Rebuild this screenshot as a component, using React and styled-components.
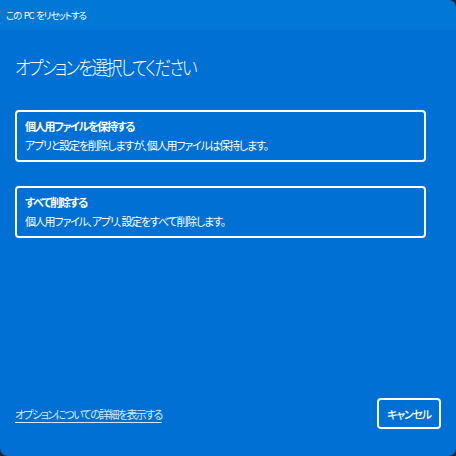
import React from "react";
import styled, { createGlobalStyle } from "styled-components";

const Global = createGlobalStyle`
  html, body { margin: 0; padding: 0; background: #1d2733; }
  body { font-family: "Noto Sans CJK JP", "Noto Sans", sans-serif; }
  * { box-sizing: border-box; }
`;

const Window = styled.div`
  width: 456px;
  height: 456px;
  display: flex;
  flex-direction: column;
  background: #0070d4;
  border-radius: 0 8px 8px 8px;
  overflow: hidden;
  color: #fff;
  font-feature-settings: "palt";
`;

const TitleBar = styled.div`
  height: 31px;
  flex: none;
  display: flex;
  align-items: center;
  padding: 0 0 0 6px;
  background: #0078d6;
  border-bottom: 1px solid #0a6fc8;
  font-size: 9.5px;
  letter-spacing: -1.1px;
  word-spacing: 1.5px;
`;

const Body = styled.div`
  flex: 1;
  display: flex;
  flex-direction: column;
  padding: 22px 30px 27px 15px;
`;

const Heading = styled.h1`
  margin: 0 0 29px 0;
  font-size: 19px;
  font-weight: 300;
  line-height: 28px;
  letter-spacing: -2.2px;
  transform: scaleX(0.87);
  transform-origin: left center;
`;

const Options = styled.div`
  display: flex;
  flex-direction: column;
  gap: 24px;
`;

const Option = styled.button`
  all: unset;
  box-sizing: border-box;
  display: flex;
  flex-direction: column;
  justify-content: center;
  height: 52px;
  padding: 0 8px 1px 8px;
  border: 2px solid #fff;
  border-radius: 4px;
  color: #fff;
  cursor: pointer;
`;

const OptionTitle = styled.div`
  font-size: 11px;
  font-weight: 700;
  line-height: 19px;
  letter-spacing: -1.3px;
`;

const OptionDesc = styled.div`
  font-size: 11px;
  font-weight: 400;
  line-height: 19px;
  letter-spacing: -1.2px;
`;

const Footer = styled.div`
  margin-top: auto;
  display: flex;
  align-items: center;
  justify-content: space-between;
  margin-right: -15px;
`;

const Link = styled.a`
  font-size: 11px;
  color: #d6e8fa;
  text-decoration: underline;
  text-underline-offset: 3px;
  letter-spacing: -1.6px;
`;

const CancelButton = styled.button`
  all: unset;
  box-sizing: border-box;
  width: 64px;
  height: 31px;
  display: flex;
  align-items: center;
  justify-content: center;
  border: 2px solid #fff;
  border-radius: 4px;
  font-size: 11px;
  font-weight: 500;
  letter-spacing: -1.2px;
  color: #fff;
`;

export default function App() {
  return (
    <>
      <Global />
      <Window>
        <TitleBar>この PC をリセットする</TitleBar>
        <Body>
          <Heading>オプションを選択してください</Heading>
          <Options>
            <Option>
              <OptionTitle>個人用ファイルを保持する</OptionTitle>
              <OptionDesc>アプリと設定を削除しますが、個人用ファイルは保持します。</OptionDesc>
            </Option>
            <Option>
              <OptionTitle>すべて削除する</OptionTitle>
              <OptionDesc>個人用ファイル、アプリ、設定をすべて削除します。</OptionDesc>
            </Option>
          </Options>
          <Footer>
            <Link>オプションについての詳細を表示する</Link>
            <CancelButton>キャンセル</CancelButton>
          </Footer>
        </Body>
      </Window>
    </>
  );
}
